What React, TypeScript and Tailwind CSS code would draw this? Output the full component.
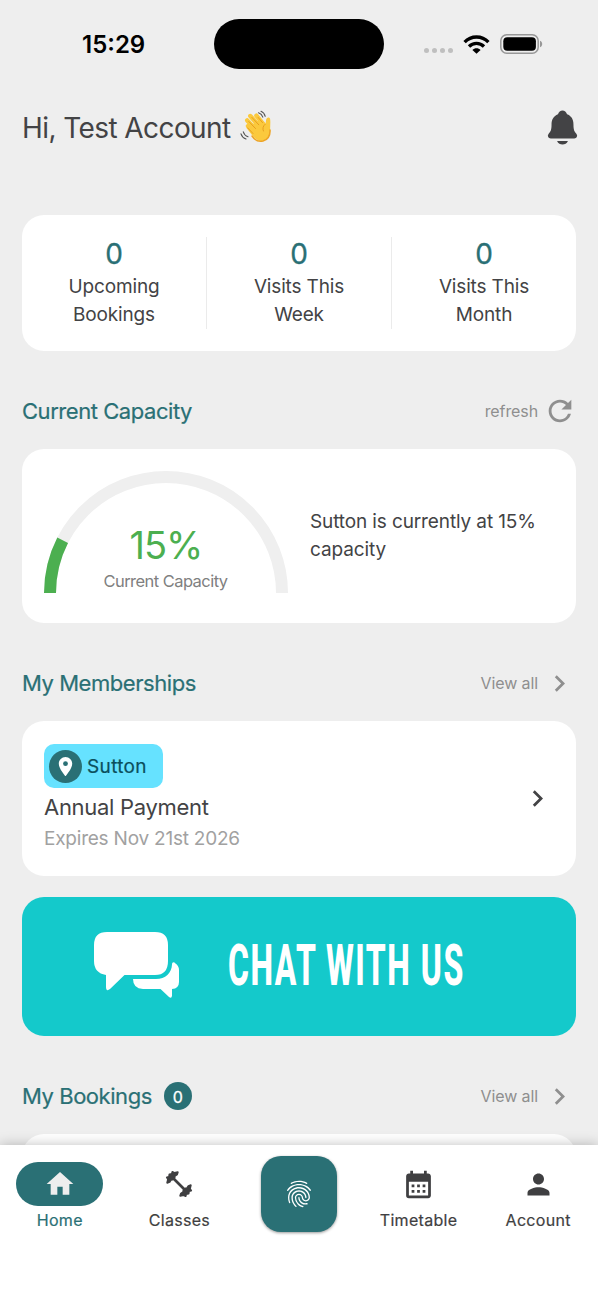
import React from 'react';
import { IoNotifications } from 'react-icons/io5';
import {
  MdCalendarMonth,
  MdChevronRight,
  MdFingerprint,
  MdHome,
  MdLocationOn,
  MdPerson,
  MdRefresh,
} from 'react-icons/md';

const STATS = [
  { value: 0, top: 'Upcoming', bottom: 'Bookings' },
  { value: 0, top: 'Visits This', bottom: 'Week' },
  { value: 0, top: 'Visits This', bottom: 'Month' },
];

const CAPACITY = 15;

function WifiIcon() {
  return (
    <svg width="27" height="20" viewBox="0 0 27 20" fill="none" stroke="#000" strokeWidth="3.3">
      <path d="M1.6 8.1C8.1 1.3 18.9 1.3 25.4 8.1" />
      <path d="M6 12.5C10.1 8.4 16.9 8.4 21 12.5" />
      <path d="M9.4 16C11.7 13.7 15.3 13.7 17.6 16L13.5 19.8Z" fill="#000" stroke="none" />
    </svg>
  );
}

function BatteryIcon() {
  return (
    <svg width="43" height="20" viewBox="0 0 43 20">
      <rect x="0.8" y="0.8" width="37.4" height="18.4" rx="6" fill="none" stroke="#979797" strokeWidth="1.5" />
      <rect x="3.3" y="3.2" width="32.6" height="13.6" rx="4" fill="#000" />
      <path d="M40 6.7C42.9 7.6 42.9 12.4 40 13.3Z" fill="#979797" />
    </svg>
  );
}

function WaveIcon() {
  return (
    <svg width="33" height="34" viewBox="0 0 33 34" fill="none" strokeLinecap="round">
      <g stroke="#fbc93d" strokeWidth="4.4">
        <path d="M8 16L16 24" />
        <path d="M7.2 10.4L18 22" />
        <path d="M10.3 6L21 18" />
        <path d="M16.4 5.6L24 15" />
      </g>
      <path
        d="M9 16L20 10L25.2 14.2C26.4 12 25.5 9.8 26.8 8.3C28 6.9 30 7.5 30.2 9.4C30.6 13 30 16 30.2 20C30.4 25 28 30.6 22.3 31C18 31.3 15 28.7 12 25L6.5 18Z"
        fill="#fbc93d"
      />
      <path d="M8.8 11.5L15.5 18.5M11.9 7.4L18.8 14.8M18.2 7.5L22.5 12.6M7.6 17.8L13 23.5" stroke="#e39a1d" strokeWidth="0.9" />
      <path d="M12 26C15 30.5 19 32 23 31C28 29.5 30.3 25 30 20" stroke="#eda426" strokeWidth="1.5" />
      <path d="M25.2 14.2C23 16 22.3 18.5 23.4 21" stroke="#e39a1d" strokeWidth="0.9" />
      <g stroke="#555" strokeWidth="1.1">
        <path d="M18.5 2.8C20.8 3.6 22.2 5.2 22.8 7.2" />
        <path d="M21 1.2C23.3 2.2 24.7 4 25.2 6.3" />
        <path d="M1 23.8C1.8 26.3 3.6 28.2 6 29" />
        <path d="M3.3 21.8C4 24.2 5.7 26 8 26.8" />
      </g>
    </svg>
  );
}

function DumbbellIcon() {
  return (
    <svg width="28" height="28" viewBox="0 0 28 28" fill="none" stroke="#3f3f41" strokeLinecap="round" strokeLinejoin="round">
      <path d="M6 6L22 22" strokeWidth="2.6" />
      <g fill="#3f3f41" strokeWidth="1.8">
        <path d="M1.8 7.4L4 6.8L4.4 4.4L6.8 4L7.4 1.8L9.4 3L12.8 2.2L12 4.6L9.8 6L9.6 7.6L7.6 9.6L6 9.8L4.6 12L2.2 12.8L3 9.4Z" />
        <path d="M26.2 20.6L24 21.2L23.6 23.6L21.2 24L20.6 26.2L18.6 25L15.2 25.8L16 23.4L18.2 22L18.4 20.4L20.4 18.4L22 18.2L23.4 16L25.8 15.2L25 18.6Z" />
      </g>
    </svg>
  );
}

function ChatIcon() {
  return (
    <svg width="85" height="66" viewBox="0 0 85 66" fill="#fff">
      <path d="M13 0H61Q74 0 74 13V29Q74 43 61 43H30.5L16 57Q12 60 12 55V43Q0 41 0 29V13Q0 0 13 0Z" />
      <path d="M39 47H62C71.5 47 77.7 41 78 32.5C78.1 29.8 80 29.7 81.5 31.5Q85 34 85 38V50Q85 56.5 78 57V63.5Q77.7 67 75 65L66.5 57H49Q39 56.5 39 47Z" />
    </svg>
  );
}

function StatusBar() {
  return (
    <div className="flex h-[88px] items-center pl-[82px]">
      <span className="w-[132px] pt-[2px] text-[24px] font-semibold text-black">15:29</span>
      <div className="h-[50px] w-[170px] rounded-full bg-black" />
      <div className="ml-10 flex gap-[3px] pt-3">
        {[0, 1, 2, 3].map(i => (
          <span key={i} className="h-[5px] w-[5px] rounded-full bg-[#bfbfbf]" />
        ))}
      </div>
      <div className="ml-[10px]"><WifiIcon /></div>
      <div className="ml-[10px]"><BatteryIcon /></div>
    </div>
  );
}

function SectionTitle({ title, badge, action, icon }: {
  title: string;
  badge?: number;
  action: React.ReactNode;
  icon: React.ReactNode;
}) {
  return (
    <div className="flex h-[98px] items-center pt-[22px]">
      <h2 className="text-[22px] tracking-[-0.45px] text-[#2a7075] [-webkit-text-stroke:0.2px]">{title}</h2>
      {badge !== undefined && (
        <span className="ml-[12px] flex h-7 w-7 items-center justify-center rounded-full bg-[#2a7075] pt-px text-[16px] text-white [-webkit-text-stroke:0.3px]">
          {badge}
        </span>
      )}
      <button className="ml-auto flex items-center text-[16px] tracking-[-0.1px] text-[#8f8f8f]">
        {action}
        {icon}
      </button>
    </div>
  );
}

function Gauge({ percent }: { percent: number }) {
  // Half circle of radius 116, drawn from left to right
  const length = Math.PI * 116;
  return (
    <div className="relative h-[122px] w-[244px] shrink-0">
      <svg width="244" height="122" viewBox="0 0 244 122" fill="none" strokeWidth="12">
        <path d="M6 122A116 116 0 0 1 238 122" stroke="#efefef" />
        <path
          d="M6 122A116 116 0 0 1 238 122"
          stroke="#4caf50"
          strokeDasharray={`${(length * percent) / 100} ${length}`}
        />
      </svg>
      <div className="absolute inset-x-0 bottom-0 flex flex-col items-center">
        <span className="text-[38px] leading-[50px] tracking-[-1px] text-[#4caf50]">{percent}%</span>
        <span className="pr-px text-[16.5px] leading-[23px] tracking-[-0.55px] text-[#808080]">Current Capacity</span>
      </div>
    </div>
  );
}

function NavItem({ label, active, children }: { label: string; active?: boolean; children: React.ReactNode }) {
  return (
    <button className={`flex flex-col items-center ${active ? 'text-[#2a7075]' : 'text-[#3f3f41]'}`}>
      <span className={`flex h-11 w-[87px] items-center justify-center rounded-full ${active ? 'bg-[#2a7075] text-[#eee]' : ''}`}>
        {children}
      </span>
      <span className="pt-0.5 text-[16px] leading-6 tracking-[0.3px] [-webkit-text-stroke:0.2px]">{label}</span>
    </button>
  );
}

export default function App() {
  return (
    <div className="flex h-[1300px] w-[598px] flex-col overflow-hidden bg-[#eee] font-['Inter','Noto_Sans',sans-serif] text-[#434345]">
      <StatusBar />

      <main className="min-h-0 flex-1 overflow-hidden px-[22px]">
        <header className="flex h-[78px] items-center">
          <h1 className="pt-px text-[28px] tracking-[-0.58px]">Hi, Test Account</h1>
          <span className="ml-[9px]"><WaveIcon /></span>
          <IoNotifications size={39} className="-mr-[6px] ml-auto" />
        </header>

        <section className="mt-[49px] flex h-[136px] rounded-[22px] bg-white py-[22px]">
          {STATS.map((stat, i) => (
            <div
              key={i}
              className={`flex flex-1 flex-col items-center text-[19px] leading-[28.5px] tracking-[-0.15px] ${i < 2 ? 'border-r border-[#ebebeb]' : ''}`}
            >
              <span className="mb-[1.5px] text-[28px] leading-[34px] text-[#2a7075] [-webkit-text-stroke:0.3px]">{stat.value}</span>
              <span>{stat.top}</span>
              <span>{stat.bottom}</span>
            </div>
          ))}
        </section>

        <SectionTitle title="Current Capacity" action="refresh" icon={<MdRefresh size={34} className="-mr-px ml-[5px]" />} />
        <section className="flex h-[174px] rounded-[22px] bg-white px-[22px] pt-[22px]">
          <Gauge percent={CAPACITY} />
          <p className="ml-[22px] w-[240px] pt-[36.5px] text-[19px] leading-[28.5px] tracking-[-0.12px]">
            {`Sutton is currently at ${CAPACITY}% capacity`}
          </p>
        </section>

        <SectionTitle title="My Memberships" action="View all" icon={<MdChevronRight size={33} className="ml-[5px]" />} />
        <section className="flex h-[155px] items-center justify-between rounded-[22px] bg-white px-[22px]">
          <div className="pt-px">
            <div className="flex h-[44px] w-[119px] items-center rounded-[10px] bg-[#66e2ff] pl-[5px]">
              <span className="flex h-[33px] w-[33px] items-center justify-center rounded-full bg-[#2a7075] text-white">
                <MdLocationOn size={23} />
              </span>
              <span className="ml-[5px] pt-[2px] text-[19px] tracking-[0.35px] text-[#0b4f5c] [-webkit-text-stroke:0.2px]">Sutton</span>
            </div>
            <p className="pt-[3px] text-[22px] leading-8 tracking-[-0.3px]">Annual Payment</p>
            <p className="pt-px text-[19px] leading-[30px] tracking-[-0.22px] text-[#a1a1a1]">Expires Nov 21st 2026</p>
          </div>
          <MdChevronRight size={33} />
        </section>

        <section className="mt-[21px] flex h-[139px] items-center rounded-[22px] bg-[#14c9cb] pb-1 pl-[72px]">
          <ChatIcon />
          <span className="ml-[49px] w-[236px] origin-left scale-x-[0.56] pt-[3px] font-['Roboto',sans-serif] text-[57px] font-extrabold tracking-[2.7px] whitespace-nowrap text-white">
            CHAT WITH US
          </span>
        </section>

        <SectionTitle title="My Bookings" badge={0} action="View all" icon={<MdChevronRight size={33} className="ml-[5px]" />} />
        <section className="h-[136px] rounded-[22px] bg-white" />
      </main>

      <nav className="z-10 grid h-[155px] shrink-0 grid-cols-5 bg-white pt-[17px] shadow-[0_0_12px_rgba(0,0,0,0.25)]">
        <NavItem label="Home" active><MdHome size={32} /></NavItem>
        <NavItem label="Classes"><DumbbellIcon /></NavItem>
        <button className="-mt-[6px] flex h-[76px] w-[76px] items-center justify-center justify-self-center rounded-[20px] bg-[#2a7075] text-white shadow-[0_1px_3px_rgba(0,0,0,0.4)]">
          <MdFingerprint size={32} />
        </button>
        <NavItem label="Timetable"><MdCalendarMonth size={33} /></NavItem>
        <NavItem label="Account"><MdPerson size={33} /></NavItem>
      </nav>
    </div>
  );
}
